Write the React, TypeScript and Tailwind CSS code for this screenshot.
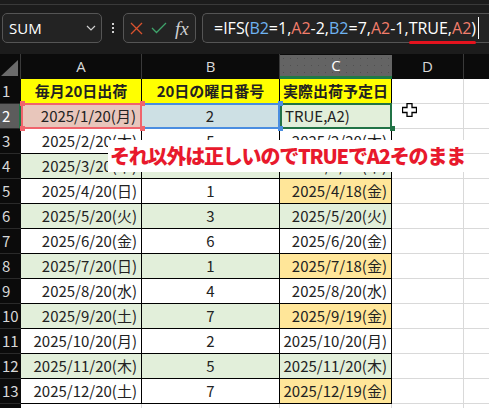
import React from "react";

type Row = {
  n: number;
  a: string;
  b: string;
  c: string;
  band: boolean;
  orange?: boolean;
};

const rows: Row[] = [
  { n: 3, a: "2025/2/20(木)", b: "5", c: "2025/2/20(木)", band: false },
  { n: 4, a: "2025/3/20(木)", b: "5", c: "2025/3/20(木)", band: true },
  { n: 5, a: "2025/4/20(日)", b: "1", c: "2025/4/18(金)", band: false, orange: true },
  { n: 6, a: "2025/5/20(火)", b: "3", c: "2025/5/20(火)", band: true },
  { n: 7, a: "2025/6/20(金)", b: "6", c: "2025/6/20(金)", band: false },
  { n: 8, a: "2025/7/20(日)", b: "1", c: "2025/7/18(金)", band: true, orange: true },
  { n: 9, a: "2025/8/20(水)", b: "4", c: "2025/8/20(水)", band: false },
  { n: 10, a: "2025/9/20(土)", b: "7", c: "2025/9/19(金)", band: true, orange: true },
  { n: 11, a: "2025/10/20(月)", b: "2", c: "2025/10/20(月)", band: false },
  { n: 12, a: "2025/11/20(木)", b: "5", c: "2025/11/20(木)", band: true },
  { n: 13, a: "2025/12/20(土)", b: "7", c: "2025/12/19(金)", band: false, orange: true },
];

const cellFont = "font-['Noto_Sans_CJK_JP',sans-serif]";

const RowHead: React.FC<{ n: number | string; selected?: boolean }> = ({ n, selected }) => (
  <div
    className={`w-[21px] h-[25px] shrink-0 flex items-center pl-[2px] text-[15px] border-b border-[#2a2a2a] ${cellFont} ${
      selected ? "bg-[#5c5c5c] text-white border-r-2 border-r-[#217346]" : "bg-[#0b0b0b] text-[#d8d8d8]"
    }`}
  >
    {n}
  </div>
);

const Toolbar: React.FC = () => (
  <div className="h-[50px] bg-[#1c1c1c] border-t border-[#3a3a3a] mt-[4px] flex items-start pt-[8px] pl-[2px] font-['Open_Sans',sans-serif]">
    <div className="w-[100px] h-[30px] rounded-[5px] border border-[#555] bg-[#232323] flex items-center justify-between pl-[6px] pr-[5px] text-[15px] text-white">
      <span>SUM</span>
      <svg width="10" height="6" viewBox="0 0 10 6">
        <path d="M1 1 L5 5 L9 1" stroke="#cfcfcf" strokeWidth="1.2" fill="none" />
      </svg>
    </div>
    <div className="w-[21px] h-[30px] flex flex-col items-center justify-center gap-[2px]">
      <span className="w-[2px] h-[2px] bg-[#d0d0d0]" />
      <span className="w-[2px] h-[2px] bg-[#d0d0d0]" />
      <span className="w-[2px] h-[2px] bg-[#d0d0d0]" />
    </div>
    <div className="w-[73px] h-[30px] rounded-[5px] border border-[#555] bg-[#232323] flex items-center pl-[6px] gap-[8px]">
      <svg width="13" height="13" viewBox="0 0 13 13">
        <path d="M1 1 L12 12 M12 1 L1 12" stroke="#d9522e" strokeWidth="1.3" />
      </svg>
      <svg width="16" height="12" viewBox="0 0 16 12">
        <path d="M1 6 L5.5 10.5 L15 1" stroke="#3fa36b" strokeWidth="1.3" fill="none" />
      </svg>
      <span className="text-[#d0d0d0] italic font-['Liberation_Serif',serif] text-[19px] leading-none">fx</span>
    </div>
    <div className="ml-[6px] flex-1 h-[30px] rounded-l-[5px] border border-r-0 border-[#555] bg-[#232323] flex items-center pl-[11px] text-[16px] text-white whitespace-nowrap relative">
      <span>=IFS(</span>
      <span className="text-[#6fb3f2]">B2</span>
      <span>=1,</span>
      <span className="text-[#f27d6b]">A2</span>
      <span>-2,</span>
      <span className="text-[#6fb3f2]">B2</span>
      <span>=7,</span>
      <span className="text-[#f27d6b]">A2</span>
      <span>-1,</span>
      <span className="relative">
        TRUE,<span className="text-[#f27d6b]">A2</span>)
        <span className="absolute left-[0px] right-[0px] bottom-[-4px] h-[3px] rounded-full bg-[#e5131e]" />
      </span>
      <span className="ml-[2px] w-[1px] h-[22px] bg-white" />
    </div>
  </div>
);

const ColHeader: React.FC = () => (
  <div className="flex h-[25px] bg-[#0b0b0b] text-[#d8d8d8] text-[15px] font-['Open_Sans',sans-serif]">
    <div className="w-[21px] shrink-0 border-r border-[#3a3a3a] flex items-end justify-end pr-[2px] pb-[3px]">
      <svg width="17" height="16" viewBox="0 0 17 16">
        <path d="M17 0 L17 16 L0 16 Z" fill="#6b6b6b" />
      </svg>
    </div>
    <div className="w-[121px] shrink-0 border-r border-[#3a3a3a] flex items-center justify-center">A</div>
    <div className="w-[138px] shrink-0 border-r border-[#3a3a3a] flex items-center justify-center">B</div>
    <div className="w-[112px] shrink-0 mt-[1px] border-b-[3px] border-[#1e7a45] bg-[#646464] bg-[radial-gradient(#505050_0.8px,transparent_0.8px)] bg-[length:7px_7px] flex items-center justify-center text-white">
      C
    </div>
    <div className="w-[72px] shrink-0 border-r border-[#3a3a3a] flex items-center justify-center">D</div>
    <div className="flex-1" />
  </div>
);

const Cell: React.FC<{
  w: string;
  bg: string;
  align?: string;
  border?: string;
  children?: React.ReactNode;
}> = ({ w, bg, align = "justify-end pr-[4px]", border = "border-r border-b border-black", children }) => (
  <div
    className={`${w} h-[25px] shrink-0 flex items-center ${align} ${bg} ${border} text-[15px] text-[#222] whitespace-nowrap overflow-hidden ${cellFont}`}
  >
    {children}
  </div>
);

const Blank: React.FC = () => (
  <>
    <div className="w-[72px] h-[25px] shrink-0 bg-white border-r border-b border-[#d9d9d9]" />
    <div className="flex-1 h-[25px] bg-white border-b border-[#d9d9d9]" />
  </>
);

export default function App() {
  return (
    <div className="w-[489px] h-[408px] overflow-hidden bg-[#1c1c1c] relative select-none">
      <Toolbar />
      <ColHeader />

      {/* row 1 */}
      <div className="flex">
        <RowHead n={1} />
        <Cell w="w-[121px]" bg="bg-[#ffff00]" align="justify-center">
          <span className="font-bold">毎月20日出荷</span>
        </Cell>
        <Cell w="w-[138px]" bg="bg-[#ffff00]" align="justify-center">
          <span className="font-bold">20日の曜日番号</span>
        </Cell>
        <Cell w="w-[112px]" bg="bg-[#ffff00]" align="justify-center">
          <span className="font-bold">実際出荷予定日</span>
        </Cell>
        <Blank />
      </div>

      {/* row 2 */}
      <div className="flex relative">
        <RowHead n={2} selected />
        <Cell w="w-[121px]" bg="bg-[#e8c6bb]" border="border-y-2 border-x-2 border-[#f0646c] -mt-[1px] h-[26px]">
          2025/1/20(月)
        </Cell>
        <Cell w="w-[138px]" bg="bg-[#cde0e4]" align="justify-center" border="border-y-2 border-r-2 border-[#4a8de0] -mt-[1px] h-[26px]">
          2
        </Cell>
        <Cell w="w-[112px]" bg="bg-[#e2efda]" align="justify-start pl-[3px]" border="border-2 border-[#217346] -mt-[1px] h-[26px]">
          TRUE,A2)
        </Cell>
        <Blank />
        <span className="absolute left-[20px] top-[-3px] w-[5px] h-[5px] bg-[#f0646c]" />
        <span className="absolute left-[20px] top-[22px] w-[5px] h-[5px] bg-[#f0646c]" />
        <span className="absolute left-[140px] top-[-3px] w-[5px] h-[5px] bg-[#f0646c]" />
        <span className="absolute left-[140px] top-[22px] w-[5px] h-[5px] bg-[#f0646c]" />
        <span className="absolute left-[278px] top-[-3px] w-[5px] h-[5px] bg-[#4a8de0]" />
        <span className="absolute left-[278px] top-[22px] w-[5px] h-[5px] bg-[#4a8de0]" />
        <span className="absolute left-[390px] top-[22px] w-[5px] h-[5px] bg-[#217346]" />
      </div>

      {rows.map((r) => {
        const band = r.band ? "bg-[#e2efda]" : "bg-white";
        return (
          <div className="flex" key={r.n}>
            <RowHead n={r.n} />
            <Cell w="w-[121px]" bg={band}>
              {r.a}
            </Cell>
            <Cell w="w-[138px]" bg={band} align="justify-center">
              {r.b}
            </Cell>
            <Cell w="w-[112px]" bg={r.orange ? "bg-[#ffe699]" : band}>
              {r.c}
            </Cell>
            <Blank />
          </div>
        );
      })}

      {/* row 14 */}
      <div className="flex">
        <RowHead n={14} />
        <div className="w-[121px] h-[25px] shrink-0 bg-white border-r border-[#d9d9d9]" />
        <div className="w-[138px] h-[25px] shrink-0 bg-white border-r border-[#d9d9d9]" />
        <div className="w-[112px] h-[25px] shrink-0 bg-white border-r border-[#d9d9d9]" />
        <div className="w-[72px] h-[25px] shrink-0 bg-white border-r border-[#d9d9d9]" />
        <div className="flex-1 h-[25px] bg-white" />
      </div>

      {/* annotation */}
      <div className="absolute left-[108px] top-[140px] w-[356px] h-[32px] bg-white flex items-center pl-[2px] text-[20px] font-black text-[#e8192c] tracking-[-1.2px] whitespace-nowrap font-['Noto_Sans_CJK_JP',sans-serif]">
        それ以外は正しいのでTRUEでA2そのまま
      </div>

      {/* mouse cursor */}
      <svg className="absolute left-[402px] top-[103px]" width="15" height="14" viewBox="0 0 15 14">
        <path
          d="M5 0.5 H10 V4.5 H14.5 V9.5 H10 V13.5 H5 V9.5 H0.5 V4.5 H5 Z"
          fill="white"
          stroke="black"
          strokeWidth="1.3"
        />
      </svg>
    </div>
  );
}
